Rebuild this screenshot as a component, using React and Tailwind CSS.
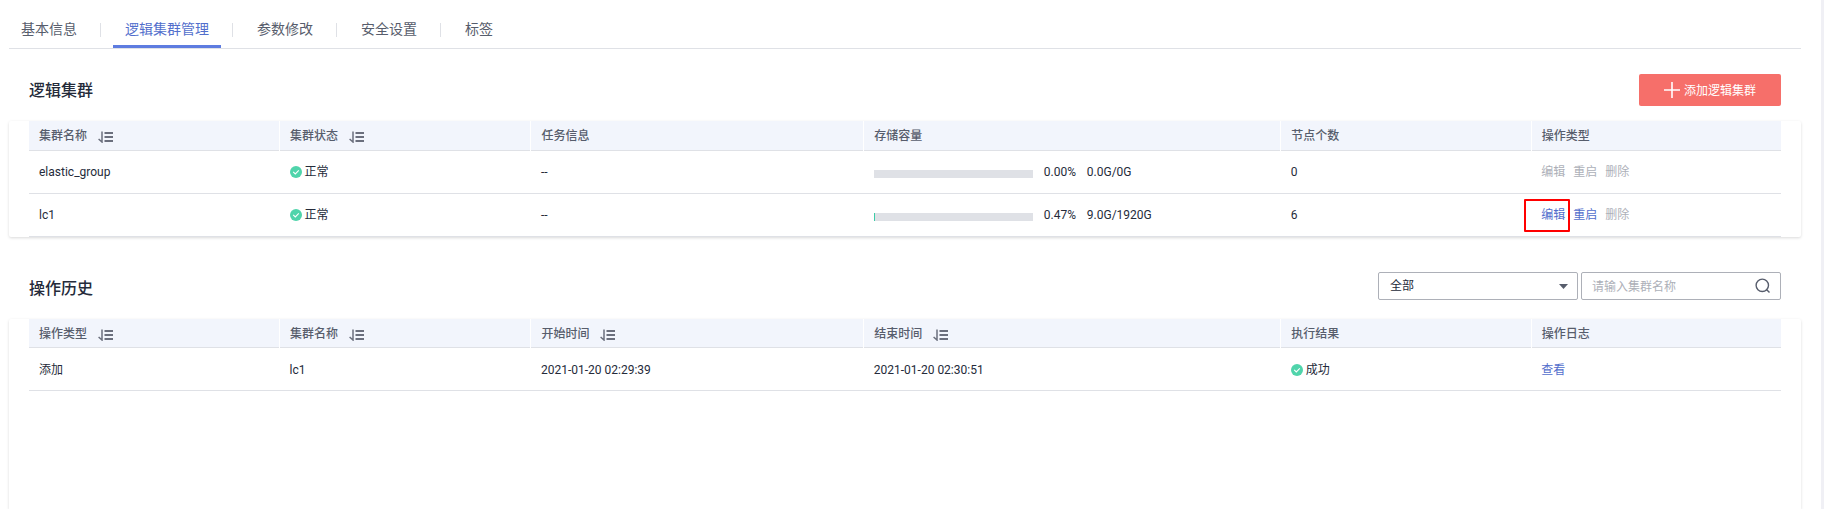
import React from "react";

const tabs = ["基本信息", "逻辑集群管理", "参数修改", "安全设置", "标签"];

function SortIcon() {
  return (
    <svg width="16" height="12" viewBox="0 0 16 12" fill="none" stroke="#6b6f7d" aria-hidden="true">
      <path d="M4 0.5V11L0.6 8" strokeWidth="1.5" />
      <path d="M6.5 2H15M6.5 6H15M6.5 10H15" strokeWidth="2" />
    </svg>
  );
}

function Status({ children }) {
  return (
    <span className="flex items-center gap-[3px]">
      <svg width="12" height="12" viewBox="0 0 12 12" fill="none" aria-hidden="true">
        <circle cx="6" cy="6" r="6" fill="#50d4ab" />
        <path d="M3.2 5.8L5.3 7.9L8.8 4.4" stroke="#fff" strokeWidth="1.1" />
      </svg>
      {children}
    </span>
  );
}

function Usage({ percent, text }) {
  return (
    <div className="flex items-center">
      <div className="mt-[3px] h-2 w-[159px] bg-[#dfe1e6]">
        {percent > 0 && (
          <div className="h-full min-w-px bg-[#3dcca6]" style={{ width: `${percent}%` }} />
        )}
      </div>
      <span className="ml-[11px] w-[43px]">{percent.toFixed(2)}%</span>
      <span>{text}</span>
    </div>
  );
}

function Action({ children, disabled, marked }) {
  return (
    <span className="relative">
      <button
        type="button"
        disabled={disabled}
        className="text-[#526ecc] disabled:text-[#adb0b8]"
      >
        {children}
      </button>
      {marked && (
        <span className="pointer-events-none absolute -top-2 -left-[17px] h-[33px] w-[46px] rounded-[1px] border-2 border-[#ff0000]" />
      )}
    </span>
  );
}

function Table({ label, columns, rows }) {
  return (
    <table aria-label={label} className="w-full table-fixed border-collapse text-left text-xs">
      <colgroup>
        <col className="w-[14.3%]" />
        <col className="w-[14.35%]" />
        <col className="w-[19%]" />
        <col className="w-[23.8%]" />
        <col className="w-[14.3%]" />
        <col className="w-[14.25%]" />
      </colgroup>
      <thead>
        <tr className="h-[29px] border-b border-[#dfe1e6] bg-[#f2f5fc]">
          {columns.map(([name, sortable]) => (
            <th
              key={name}
              scope="col"
              className="border-r border-r-white px-[10px] pt-[2px] pb-0 font-medium text-[#575d6c] last:border-r-0"
            >
              <span className="flex items-center gap-[11px] leading-4">
                {name}
                {sortable && (
                  <button type="button" aria-label={`按${name}排序`} className="pt-[2px]">
                    <SortIcon />
                  </button>
                )}
              </span>
            </th>
          ))}
        </tr>
      </thead>
      <tbody>
        {rows.map((row, i) => (
          <tr key={i} className="h-[43px] border-b border-[#dfe1e6]">
            {row.map((cell, j) => (
              <td key={j} className="px-[10px] pt-px pb-0">
                {cell}
              </td>
            ))}
          </tr>
        ))}
      </tbody>
    </table>
  );
}

const clusterRows = [
  [
    "elastic_group",
    <Status>正常</Status>,
    "--",
    <Usage percent={0} text="0.0G/0G" />,
    "0",
    <div className="flex gap-2">
      <Action disabled>编辑</Action>
      <Action disabled>重启</Action>
      <Action disabled>删除</Action>
    </div>,
  ],
  [
    "lc1",
    <Status>正常</Status>,
    "--",
    <Usage percent={0.47} text="9.0G/1920G" />,
    "6",
    <div className="flex gap-2">
      <Action marked>编辑</Action>
      <Action>重启</Action>
      <Action disabled>删除</Action>
    </div>,
  ],
];

const historyRows = [
  [
    "添加",
    "lc1",
    "2021-01-20 02:29:39",
    "2021-01-20 02:30:51",
    <Status>成功</Status>,
    <a href="#log" className="text-[#526ecc]">查看</a>,
  ],
];

export default function App() {
  return (
    <div className="flex h-screen flex-col overflow-hidden border-r-[3px] border-[#f0f0f5] bg-white pr-5 pl-[9px] font-[Roboto,'Noto_Sans_CJK_SC',sans-serif] text-xs text-[#252b3a]">
      <nav className="flex h-[49px] shrink-0 items-end border-b border-[#dfe1e6] text-sm text-[#575d6c]">
        {tabs.map((tab, i) => (
          <React.Fragment key={tab}>
            {i > 0 && <span className="mr-3 mb-[11px] ml-[11px] h-[14px] w-px bg-[#dfe1e6]" />}
            <a
              href="#tab"
              aria-current={i === 1 ? "page" : undefined}
              className="flex h-[38px] items-center border-y-[3px] border-transparent px-3 aria-[current=page]:border-b-[#5e7ce0] aria-[current=page]:text-[#526ecc]"
            >
              {tab}
            </a>
          </React.Fragment>
        ))}
      </nav>

      <header className="mt-[25px] flex h-8 shrink-0 items-center justify-between px-5">
        <h2 className="pt-[2px] text-base font-medium">逻辑集群</h2>
        <button
          type="button"
          className="flex h-8 w-[142px] items-center justify-center gap-1 rounded-[2px] bg-[#f66f6a] text-white"
        >
          <svg width="16" height="16" viewBox="0 0 16 16" stroke="currentColor" strokeWidth="1.6" aria-hidden="true">
            <path d="M8 0V16M0 8H16" />
          </svg>
          <span className="pt-[2px]">添加逻辑集群</span>
        </button>
      </header>
      <section className="mt-[15px] shrink-0 rounded-[2px] px-5 shadow-[0_1px_3px_rgba(0,0,0,0.15)]">
        <Table
          label="逻辑集群"
          columns={[["集群名称", true], ["集群状态", true], ["任务信息"], ["存储容量"], ["节点个数"], ["操作类型"]]}
          rows={clusterRows}
        />
      </section>

      <header className="mt-[35px] flex h-7 shrink-0 items-center justify-between px-5">
        <h2 className="pt-[6px] text-base font-medium">操作历史</h2>
        <div className="flex gap-[3px]">
          <div className="relative">
            <select
              aria-label="操作类型"
              className="h-7 w-[200px] appearance-none rounded-[2px] border border-[#adb0b8] bg-white px-[11px]"
            >
              <option>全部</option>
            </select>
            <svg className="pointer-events-none absolute top-3 right-[10px]" width="9" height="5" viewBox="0 0 9 5" aria-hidden="true">
              <path d="M0 0H9L4.5 5Z" fill="#575d6c" />
            </svg>
          </div>
          <div className="relative">
            <input
              type="text"
              aria-label="集群名称"
              placeholder="请输入集群名称"
              className="h-7 w-[200px] rounded-[2px] border border-[#adb0b8] pt-[2px] pr-8 pl-[10px] placeholder:text-[#adb0b8]"
            />
            <svg className="pointer-events-none absolute top-[6px] right-[10px]" width="16" height="16" viewBox="0 0 16 16" fill="none" stroke="#575d6c" strokeWidth="1.4" aria-hidden="true">
              <circle cx="7.3" cy="7.3" r="6.2" />
              <path d="M11.2 11.2L14.5 14.5" />
            </svg>
          </div>
        </div>
      </header>
      <section className="mt-[19px] flex-1 rounded-t-[2px] px-5 shadow-[0_1px_3px_rgba(0,0,0,0.15)]">
        <Table
          label="操作历史"
          columns={[["操作类型", true], ["集群名称", true], ["开始时间", true], ["结束时间", true], ["执行结果"], ["操作日志"]]}
          rows={historyRows}
        />
      </section>
    </div>
  );
}
